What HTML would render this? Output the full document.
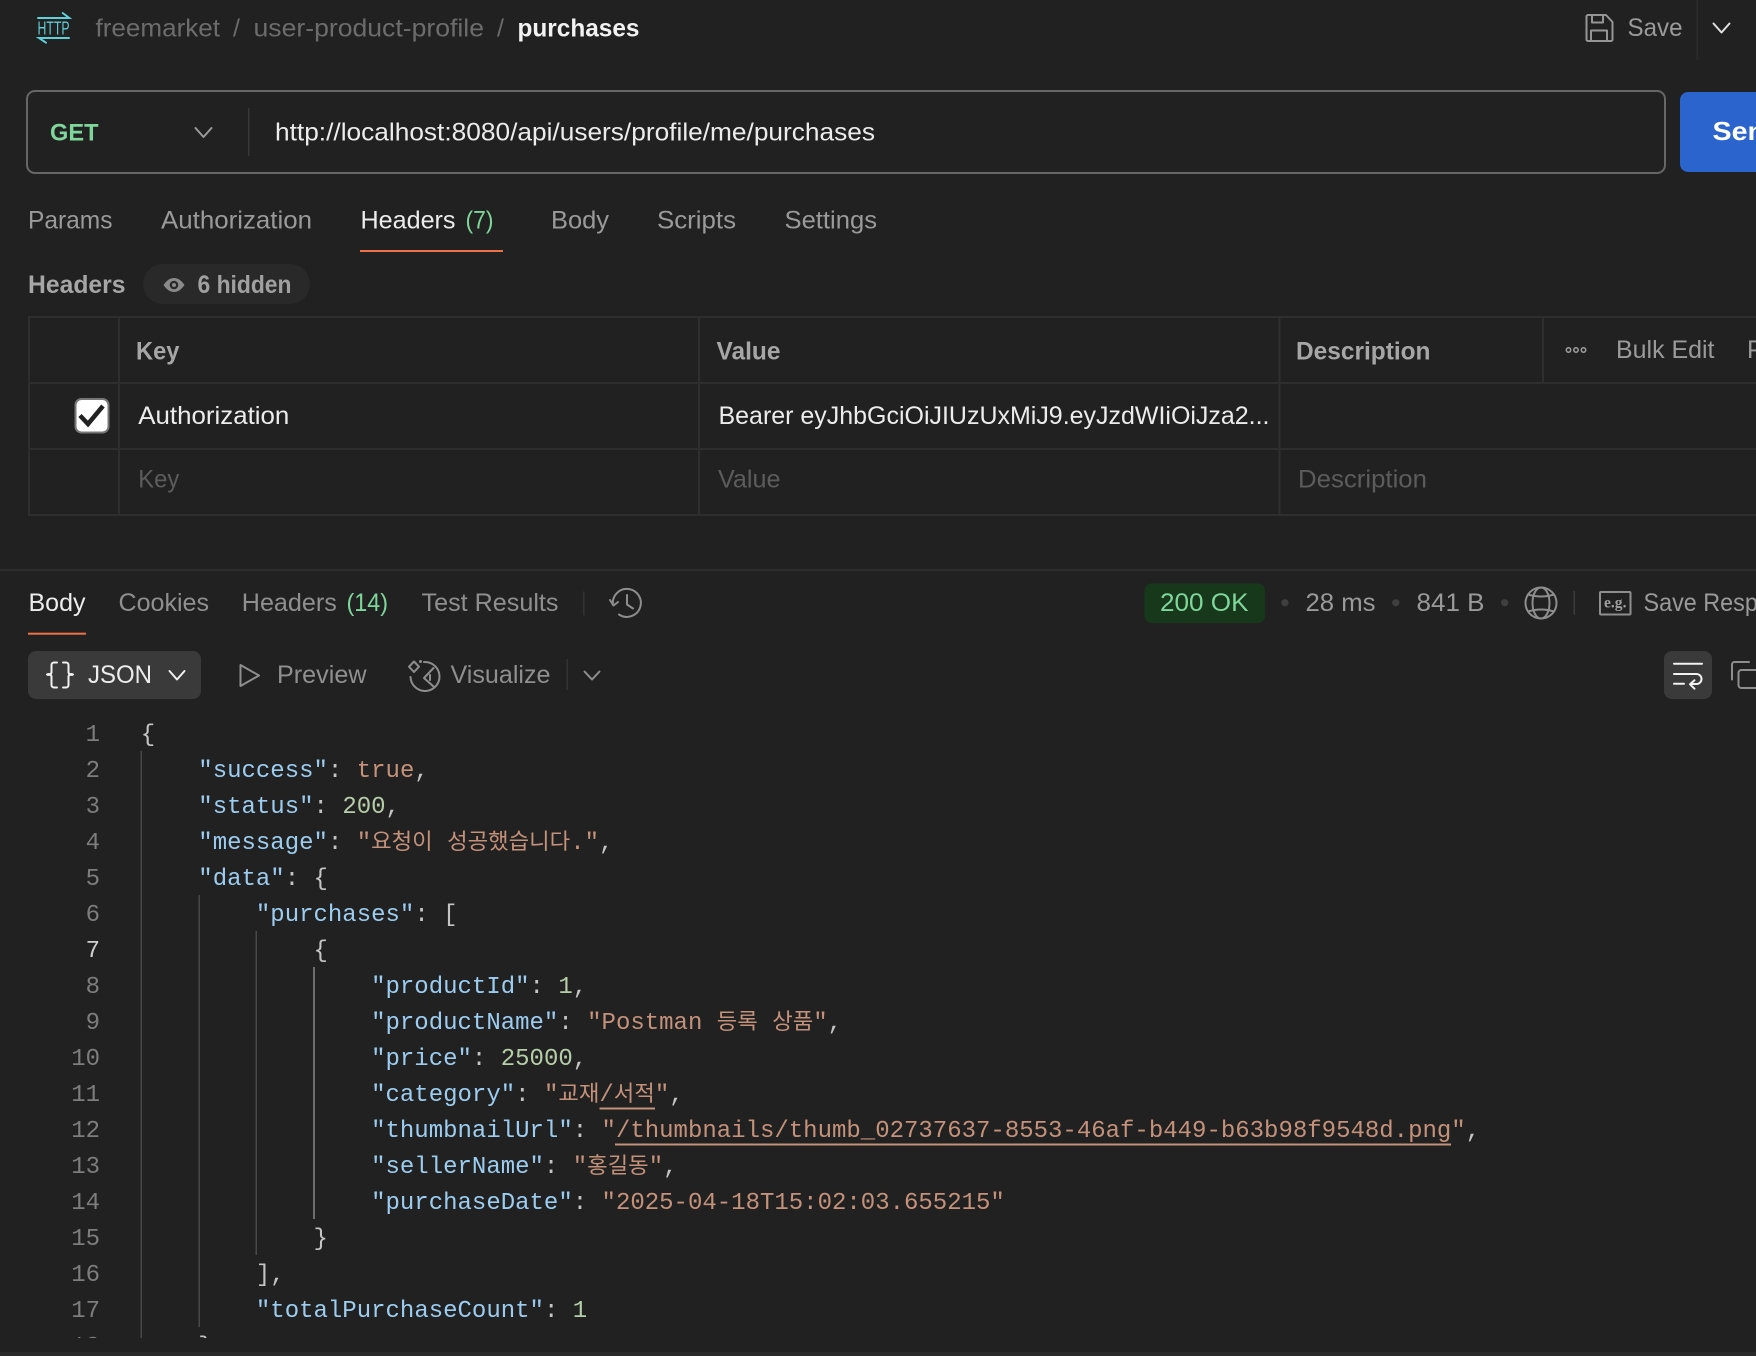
<!DOCTYPE html>
<html lang="en">
<head>
<meta charset="utf-8">
<title>purchases</title>
<style>
html,body{margin:0;padding:0;background:#212121;width:1756px;height:1356px;overflow:hidden}
svg{display:block}
.s{font-family:"Liberation Sans","Noto Sans CJK KR",sans-serif;font-size:25px}
.b{font-weight:700}
.m{font-family:"Liberation Mono","Noto Sans CJK KR",monospace;font-size:24px;fill:#c4c4c4;white-space:pre}
.n{fill:#7d7d7d;text-anchor:end}
.k{fill:#9ccdf0}
.v{fill:#c4917a}
.d{fill:#b5cea8}
.h{font-family:"Noto Sans CJK KR",sans-serif;font-size:22.3px;fill:#c4917a}
.ic{fill:none;stroke:#8e8e8e;stroke-width:2;stroke-linecap:round;stroke-linejoin:round}
.tl{fill:#2e2e2e}
</style>
</head>
<body>
<svg width="1756" height="1356" viewBox="0 0 1756 1356" xmlns="http://www.w3.org/2000/svg">
<rect width="1756" height="1356" fill="#212121"/>

<!-- top bar -->
<g fill="none" stroke="#5fcfd9" stroke-width="2" stroke-linecap="round">
<path d="M38 18H69.3L62.7 13"/>
<path d="M69 38H39L46 42.7"/>
</g>
<text class="s" x="37.5" y="34.5" style="font-size:18px" fill="#5fcfd9" textLength="32" lengthAdjust="spacingAndGlyphs">HTTP</text>
<text class="s" x="95.5" y="36.5" fill="#6c6c6c" textLength="124.5" lengthAdjust="spacingAndGlyphs">freemarket</text>
<text class="s" x="233" y="36.5" fill="#6c6c6c">/</text>
<text class="s" x="253.5" y="36.5" fill="#6c6c6c" textLength="230.5" lengthAdjust="spacingAndGlyphs">user-product-profile</text>
<text class="s" x="497" y="36.5" fill="#6c6c6c">/</text>
<text class="s b" x="517.5" y="36.5" fill="#f2f2f2" textLength="122" lengthAdjust="spacingAndGlyphs">purchases</text>

<g class="ic" style="stroke:#959595">
<path d="M1588 15H1606L1612.5 22V39.5a1.5 1.5 0 0 1-1.5 1.5H1588a1.5 1.5 0 0 1-1.5-1.5V16.5A1.5 1.5 0 0 1 1588 15Z"/>
<path d="M1592 15V22.5H1603V15"/>
<path d="M1591 41V30.5H1607V41"/>
</g>
<text class="s" x="1627.5" y="36" fill="#9a9a9a" textLength="55" lengthAdjust="spacingAndGlyphs">Save</text>
<rect x="1696.5" y="0" width="1.5" height="60" fill="#2c2c2c"/>
<path d="M1713.5 23.5L1721.5 32.5L1729.5 23.5" fill="none" stroke="#e0e0e0" stroke-width="2" stroke-linecap="round" stroke-linejoin="round"/>

<!-- URL bar -->
<rect x="27" y="91" width="1638" height="82" rx="8" fill="#212121" stroke="#666" stroke-width="2"/>
<text class="s b" x="50" y="140.7" fill="#7fd69a" textLength="48.5" lengthAdjust="spacingAndGlyphs" style="font-size:24px">GET</text>
<path d="M195.5 128L203.5 137L211.5 128" fill="none" stroke="#9a9a9a" stroke-width="2" stroke-linecap="round" stroke-linejoin="round"/>
<rect x="248" y="108" width="1.5" height="48" fill="#383838"/>
<text class="s" x="275" y="140.5" fill="#ececec" textLength="600" lengthAdjust="spacingAndGlyphs">http://localhost:8080/api/users/profile/me/purchases</text>
<path d="M1756 92H1688a8 8 0 0 0-8 8V164a8 8 0 0 0 8 8H1756Z" fill="#2b64cc"/>
<text class="s b" x="1712.5" y="140" fill="#fff" style="font-size:26px" textLength="70" lengthAdjust="spacingAndGlyphs">Send</text>

<!-- request tabs -->
<g class="s" fill="#9a9a9a">
<text x="28" y="228.7" textLength="84.5" lengthAdjust="spacingAndGlyphs">Params</text>
<text x="161" y="228.7" textLength="151" lengthAdjust="spacingAndGlyphs">Authorization</text>
<text x="360.5" y="228.7" fill="#ececec" textLength="95" lengthAdjust="spacingAndGlyphs">Headers</text>
<text x="465.5" y="228.7" fill="#7fd69a" textLength="28" lengthAdjust="spacingAndGlyphs">(7)</text>
<text x="551" y="228.7" textLength="58" lengthAdjust="spacingAndGlyphs">Body</text>
<text x="657" y="228.7" textLength="79" lengthAdjust="spacingAndGlyphs">Scripts</text>
<text x="784.5" y="228.7" textLength="92.5" lengthAdjust="spacingAndGlyphs">Settings</text>
</g>
<rect x="360" y="250" width="143" height="2" fill="#ea7148"/>

<!-- headers label -->
<text class="s b" x="28" y="293" fill="#a6a6a6" textLength="97.5" lengthAdjust="spacingAndGlyphs">Headers</text>
<rect x="143" y="264" width="167" height="40" rx="20" fill="#292929"/>
<path d="M163.5 285C167 279.8 170.5 278 174 278S181 279.8 184.5 285C181 290.200 177.5 292 174 292S167 290.200 163.5 285Z" fill="#8a8a8a"/>
<circle cx="174" cy="285" r="4.3" fill="#292929"/>
<circle cx="174" cy="285" r="2" fill="#8a8a8a"/>
<text class="s b" x="197.5" y="293" fill="#a0a0a0" textLength="94" lengthAdjust="spacingAndGlyphs">6 hidden</text>

<!-- table -->
<rect class="tl" x="28" y="316" width="1728" height="2"/>
<rect class="tl" x="28" y="382" width="1728" height="2"/>
<rect class="tl" x="28" y="448" width="1728" height="2"/>
<rect class="tl" x="28" y="514" width="1728" height="2"/>
<rect class="tl" x="28" y="316" width="2" height="200"/>
<rect class="tl" x="118" y="316" width="2" height="200"/>
<rect class="tl" x="698" y="316" width="2" height="200"/>
<rect class="tl" x="1278.5" y="316" width="2" height="200"/>
<rect class="tl" x="1542" y="316" width="2" height="67"/>

<text class="s b" x="136" y="359.3" fill="#a6a6a6" textLength="43.5" lengthAdjust="spacingAndGlyphs">Key</text>
<text class="s b" x="716.5" y="359.3" fill="#a6a6a6" textLength="64" lengthAdjust="spacingAndGlyphs">Value</text>
<text class="s b" x="1296" y="359.3" fill="#a6a6a6" textLength="134.5" lengthAdjust="spacingAndGlyphs">Description</text>
<g fill="none" stroke="#a0a0a0" stroke-width="1.5">
<circle cx="1568.5" cy="350" r="2.2"/>
<circle cx="1576" cy="350" r="2.2"/>
<circle cx="1583.5" cy="350" r="2.2"/>
</g>
<text class="s" x="1616" y="358" fill="#9a9a9a" textLength="98.5" lengthAdjust="spacingAndGlyphs">Bulk Edit</text>
<text class="s" x="1747" y="358" fill="#9a9a9a">Presets</text>

<rect x="75.5" y="399" width="33" height="33.5" rx="6" fill="#fff" stroke="#777" stroke-width="2"/>
<path d="M80 415.5L88 424L103 406" fill="none" stroke="#212121" stroke-width="4.500" stroke-linejoin="miter"/>
<text class="s" x="138.3" y="424" fill="#ececec" textLength="151" lengthAdjust="spacingAndGlyphs">Authorization</text>
<text class="s" x="718.5" y="424" fill="#ececec" textLength="551" lengthAdjust="spacingAndGlyphs">Bearer eyJhbGciOiJIUzUxMiJ9.eyJzdWIiOiJza2...</text>
<text class="s" x="138.3" y="487.7" fill="#5c5c5c" textLength="41" lengthAdjust="spacingAndGlyphs">Key</text>
<text class="s" x="718" y="487.7" fill="#5c5c5c" textLength="62.5" lengthAdjust="spacingAndGlyphs">Value</text>
<text class="s" x="1298" y="487.7" fill="#5c5c5c" textLength="129" lengthAdjust="spacingAndGlyphs">Description</text>

<!-- response header -->
<rect x="0" y="569" width="1756" height="2" fill="#2e2e2e"/>
<g class="s" fill="#8f8f8f">
<text x="28.5" y="611.2" fill="#ececec" textLength="57" lengthAdjust="spacingAndGlyphs">Body</text>
<text x="118.5" y="611.2" textLength="90.5" lengthAdjust="spacingAndGlyphs">Cookies</text>
<text x="241.8" y="611.2" textLength="95" lengthAdjust="spacingAndGlyphs">Headers</text>
<text x="346.5" y="611.2" fill="#7fd69a" textLength="41.5" lengthAdjust="spacingAndGlyphs">(14)</text>
<text x="421.5" y="611.2" textLength="137" lengthAdjust="spacingAndGlyphs">Test Results</text>
</g>
<rect x="28" y="632.7" width="58" height="2" fill="#ea7148"/>
<rect x="583" y="591.5" width="1.5" height="24" fill="#333"/>
<g class="ic">
<path d="M613 605A14 14 0 1 1 619 614.5"/>
<path d="M610 600L613.5 605.5L618 602"/>
<path d="M627 595V604.5L633 608.5"/>
</g>

<rect x="1144.5" y="583.5" width="120.5" height="39.5" rx="7" fill="#17381b"/>
<text class="s" x="1160" y="611.2" fill="#7fd69a" textLength="88.5" lengthAdjust="spacingAndGlyphs">200 OK</text>
<circle cx="1285" cy="602.7" r="3.6" fill="#3f3f3f"/>
<text class="s" x="1305.5" y="611.2" fill="#9a9a9a" textLength="70" lengthAdjust="spacingAndGlyphs">28 ms</text>
<circle cx="1395.8" cy="602.7" r="3.6" fill="#3f3f3f"/>
<text class="s" x="1416.5" y="611.2" fill="#9a9a9a" textLength="68" lengthAdjust="spacingAndGlyphs">841 B</text>
<circle cx="1504.6" cy="602.7" r="3.6" fill="#3f3f3f"/>
<g class="ic">
<circle cx="1541" cy="603" r="15.5"/>
<ellipse cx="1541" cy="603" rx="8.5" ry="15.5"/>
<path d="M1528 594.5Q1541 598.5 1554 594.5"/>
<path d="M1528 611.5Q1541 607.5 1554 611.5"/>
</g>
<rect x="1573.5" y="591" width="1.5" height="24" fill="#3a3a3a"/>
<rect x="1600" y="592" width="30.5" height="22.5" rx="1" fill="none" stroke="#8e8e8e" stroke-width="2"/>
<text x="1604" y="607.5" font-family="Liberation Serif,serif" font-weight="700" font-size="16" fill="#9e9e9e" textLength="22.5" lengthAdjust="spacingAndGlyphs">e.g.</text>
<text class="s" x="1643.5" y="611.2" fill="#9a9a9a" textLength="165" lengthAdjust="spacingAndGlyphs">Save Response</text>

<!-- view toolbar -->
<rect x="28" y="651" width="173" height="48" rx="8" fill="#3a3a3a"/>
<g fill="none" stroke="#f0f0f0" stroke-width="2" stroke-linecap="round" stroke-linejoin="round">
<path d="M57 662.5H54a2.5 2.5 0 0 0-2.5 2.5V671.5a3 3 0 0 1-4.5 3 3 3 0 0 1 4.5 3V685a2.5 2.5 0 0 0 2.5 2.5H57"/>
<path d="M63 662.5H66a2.5 2.5 0 0 1 2.5 2.5V671.5a3 3 0 0 0 4.500 3 3 3 0 0 0-4.500 3V685a2.5 2.5 0 0 1-2.500 2.5H63"/>
<path d="M169.5 671L177 679.5L184.5 671"/>
</g>
<text class="s" x="88" y="683.2" fill="#ececec" textLength="64" lengthAdjust="spacingAndGlyphs">JSON</text>
<path d="M240.500 665L259 675.500L240.500 686Z" class="ic"/>
<text class="s" x="277" y="683.2" fill="#8f8f8f" textLength="89.5" lengthAdjust="spacingAndGlyphs">Preview</text>
<g class="ic">
<path d="M414 661.500L419 666.700L414 672L409 666.700Z"/>
<circle cx="420.5" cy="661.5" r="1" fill="#8e8e8e" stroke-width="1"/>
<path d="M424 662A14.500 14.500 0 1 1 410.500 677"/>
<path d="M433.500 668L424 678L433.500 686.500"/>
<path d="M430 675V680"/>
</g>
<text class="s" x="450.5" y="683.2" fill="#8f8f8f" textLength="100" lengthAdjust="spacingAndGlyphs">Visualize</text>
<rect x="566.5" y="659" width="1.5" height="31" fill="#333"/>
<path d="M584.500 671.500L592 679.500L599.500 671.500" class="ic"/>

<rect x="1664" y="651" width="48" height="48" rx="8" fill="#3a3a3a"/>
<g fill="none" stroke="#f2f2f2" stroke-width="2" stroke-linecap="round" stroke-linejoin="round">
<path d="M1674 663.800H1702"/>
<path d="M1674 674H1696.500a5 5 0 0 1 0 10H1690.500"/>
<path d="M1694.500 680.300L1690 684.300L1694.500 688.700"/>
<path d="M1674 683.800H1684"/>
</g>
<g class="ic">
<path d="M1732 679.500V664.500a2.500 2.500 0 0 1 2.500-2.500H1749"/>
<rect x="1738.500" y="670" width="28" height="18" rx="3"/>
</g>

<!-- code -->
<clipPath id="cc"><rect x="0" y="700" width="1756" height="638"/></clipPath>
<g clip-path="url(#cc)">
<rect x="140.5" y="751" width="1.5" height="587" fill="#484848"/>
<rect x="198.5" y="895" width="1.5" height="432" fill="#484848"/>
<rect x="255.5" y="931" width="1.5" height="324" fill="#484848"/>
<rect x="313" y="967" width="2" height="252" fill="#6e6e6e"/>

<g class="m" transform="translate(0,-1)">
<text class="m n" x="100" y="742">1</text>
<text class="m n" x="100" y="778">2</text>
<text class="m n" x="100" y="814">3</text>
<text class="m n" x="100" y="850">4</text>
<text class="m n" x="100" y="886">5</text>
<text class="m n" x="100" y="922">6</text>
<text class="m n" x="100" y="958" style="fill:#cfcfcf">7</text>
<text class="m n" x="100" y="994">8</text>
<text class="m n" x="100" y="1030">9</text>
<text class="m n" x="100" y="1066">10</text>
<text class="m n" x="100" y="1102">11</text>
<text class="m n" x="100" y="1138">12</text>
<text class="m n" x="100" y="1174">13</text>
<text class="m n" x="100" y="1210">14</text>
<text class="m n" x="100" y="1246">15</text>
<text class="m n" x="100" y="1282">16</text>
<text class="m n" x="100" y="1318">17</text>
<text class="m n" x="100" y="1354">18</text>

<text class="m" x="140.700" y="742">{</text>
<text class="m" x="198.300" y="778"><tspan class="k">"success"</tspan>: <tspan class="v">true</tspan>,</text>
<text class="m" x="198.300" y="814"><tspan class="k">"status"</tspan>: <tspan class="d">200</tspan>,</text>
<text class="m" x="198.300" y="850"><tspan class="k">"message"</tspan>: <tspan class="v">"</tspan><tspan class="h">요청이</tspan> <tspan class="h">성공했습니다</tspan><tspan class="v">."</tspan>,</text>
<text class="m" x="198.300" y="886"><tspan class="k">"data"</tspan>: {</text>
<text class="m" x="255.900" y="922"><tspan class="k">"purchases"</tspan>: [</text>
<text class="m" x="313.500" y="958">{</text>
<text class="m" x="371.100" y="994"><tspan class="k">"productId"</tspan>: <tspan class="d">1</tspan>,</text>
<text class="m" x="371.100" y="1030"><tspan class="k">"productName"</tspan>: <tspan class="v">"Postman </tspan><tspan class="h">등록</tspan> <tspan class="h">상품</tspan><tspan class="v">"</tspan>,</text>
<text class="m" x="371.100" y="1066"><tspan class="k">"price"</tspan>: <tspan class="d">25000</tspan>,</text>
<text class="m" x="371.100" y="1102"><tspan class="k">"category"</tspan>: <tspan class="v">"</tspan><tspan class="h">교재</tspan><tspan class="v">/</tspan><tspan class="h">서적</tspan><tspan class="v">"</tspan>,</text>
<text class="m" x="371.100" y="1138"><tspan class="k">"thumbnailUrl"</tspan>: <tspan class="v">"/thumbnails/thumb_02737637-8553-46af-b449-b63b98f9548d.png"</tspan>,</text>
<text class="m" x="371.100" y="1174"><tspan class="k">"sellerName"</tspan>: <tspan class="v">"</tspan><tspan class="h">홍길동</tspan><tspan class="v">"</tspan>,</text>
<text class="m" x="371.100" y="1210"><tspan class="k">"purchaseDate"</tspan>: <tspan class="v">"2025-04-18T15:02:03.655215"</tspan></text>
<text class="m" x="313.500" y="1246">}</text>
<text class="m" x="255.900" y="1282">],</text>
<text class="m" x="255.900" y="1318"><tspan class="k">"totalPurchaseCount"</tspan>: <tspan class="d">1</tspan></text>
<text class="m" x="198.300" y="1354">}</text>
</g>
<rect x="599.5" y="1107.5" width="55.5" height="2" fill="#c4917a"/>
<rect x="615" y="1143.5" width="836" height="2" fill="#c4917a"/>
</g>

<rect x="0" y="1352" width="1756" height="4" fill="#2a2a2a"/>
</svg>
</body>
</html>
